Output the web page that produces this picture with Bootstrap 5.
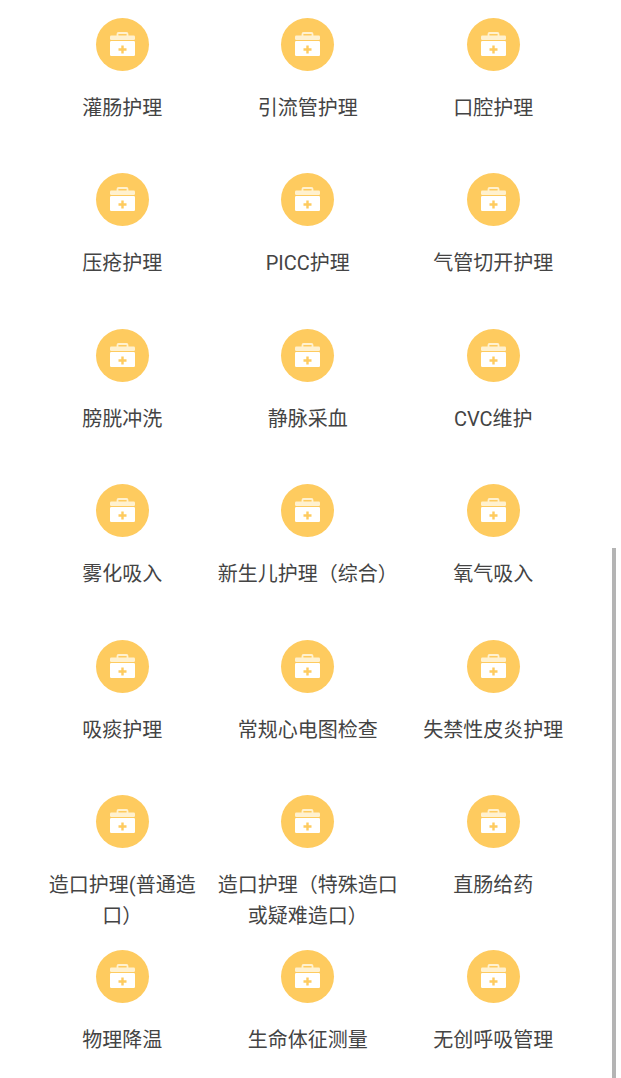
<!DOCTYPE html>
<html lang="zh">
<head>
  <meta charset="UTF-8" />
  <meta name="viewport" content="width=device-width, initial-scale=1.0"/>
  <title>护理项目</title>
  <link href="https://cdn.jsdelivr.net/npm/bootstrap@5.3.3/dist/css/bootstrap.min.css" rel="stylesheet">
  <style>
    html, body { height: 1078px; overflow: hidden; background: #fff; }
    .care-grid {
      display: grid;
      grid-template-columns: repeat(3, 185.5px);
      grid-auto-rows: 155.4px;
      margin-left: 29.5px;
      padding-top: 18px;
    }
    .care-item { text-align: center; }
    .care-icon {
      width: 53px; height: 53px;
      border-radius: 50%;
      background: #fecb5f;
      margin: 0 auto 22px;
    }
    .care-icon svg { display: block; }
    .care-name {
      font-family: Roboto, "Noto Sans CJK SC", sans-serif;
      font-size: 20px;
      line-height: 31px;
      color: #444;
      padding: 0 2px;
      text-spacing-trim: space-all;
    }
    .fake-scroll {
      position: absolute;
      left: 612px; top: 548px;
      width: 4px; height: 530px;
      background: #b4b4b4;
    }
  </style>
</head>
<body>
<div class="care-grid" id="careGrid"></div>
<div class="fake-scroll"></div>
<script>
const names = [
  '灌肠护理', '引流管护理', '口腔护理',
  '压疮护理', 'PICC护理', '气管切开护理',
  '膀胱冲洗', '静脉采血', 'CVC维护',
  '雾化吸入', '新生儿护理（综合）', '氧气吸入',
  '吸痰护理', '常规心电图检查', '失禁性皮炎护理',
  '造口护理(普通造口）', '造口护理（特殊造口或疑难造口）', '直肠给药',
  '物理降温', '生命体征测量', '无创呼吸管理'
];
const icon = `<svg width="53" height="53" viewBox="0 0 53 53">
  <path d="M21.5 18v-2a1 1 0 0 1 1-1h8a1 1 0 0 1 1 1v2" fill="none" stroke="#fff1cf" stroke-width="1.8"/>
  <rect x="14" y="17.5" width="25" height="4.5" rx="1.2" fill="#fff1cf"/>
  <rect x="14" y="23" width="25" height="15" rx="1.2" fill="#fff"/>
  <path d="M26.5 27.5v8M22.5 31.5h8" stroke="#fecb5f" stroke-width="2.4"/>
</svg>`;
const grid = document.getElementById('careGrid');
names.forEach(n => {
  const item = document.createElement('div');
  item.className = 'care-item';
  item.innerHTML = `<div class="care-icon">${icon}</div><div class="care-name">${n}</div>`;
  grid.appendChild(item);
});
</script>
<script src="https://cdn.jsdelivr.net/npm/bootstrap@5.3.3/dist/js/bootstrap.bundle.min.js"></script>
</body>
</html>
